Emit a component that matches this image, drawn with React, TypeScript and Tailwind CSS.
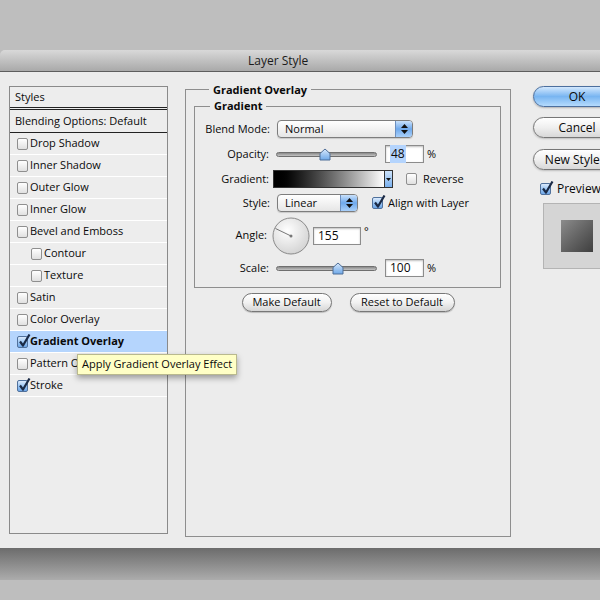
import React from "react";

function Check({ checked = false }: { checked?: boolean }) {
  return (
    <span
      className={
        checked
          ? "relative inline-block h-[12px] w-[11px] shrink-0 rounded-[2px] border border-[#50719c] bg-linear-to-b from-[#dbeafc] via-[#9cc7f4] to-[#6ea6e7]"
          : "relative inline-block h-[12px] w-[11px] shrink-0 rounded-[2px] border border-[#8f8f8f] bg-linear-to-b from-[#ffffff] to-[#e0e0e0]"
      }
    >
      {checked && (
        <svg className="absolute left-[0px] top-[-3px]" width="13" height="14" viewBox="0 0 13 14">
          <path d="M2 7.5 L5 11.5 L11.5 0.5" fill="none" stroke="#1a2a46" strokeWidth="2.2" strokeLinejoin="round" />
        </svg>
      )}
    </span>
  );
}

function StyleRow({
  label,
  checked = false,
  indent = false,
  selected = false,
}: {
  label: string;
  checked?: boolean;
  indent?: boolean;
  selected?: boolean;
}) {
  return (
    <div
      className={
        "flex h-[22px] items-center border-b border-white " +
        (selected ? "bg-[#b5d5fd] font-bold " : "") +
        (indent ? "pl-[21px]" : "pl-[7px]")
      }
    >
      <Check checked={checked} />
      <span className="ml-[2px] whitespace-nowrap">{label}</span>
    </div>
  );
}

function UpDown() {
  return (
    <div className="flex h-full w-[17px] flex-col items-center justify-center gap-[2px] rounded-r-[3px] border-l border-[#6c8fbf] bg-linear-to-b from-[#c9e1fb] via-[#6fa9ec] to-[#a9d0fa]">
      <svg width="7" height="4" viewBox="0 0 7 4"><path d="M3.5 0 L7 4 L0 4 Z" fill="#111" /></svg>
      <svg width="7" height="4" viewBox="0 0 7 4"><path d="M0 0 L7 0 L3.5 4 Z" fill="#111" /></svg>
    </div>
  );
}

function Thumb() {
  return (
    <svg width="12" height="13" viewBox="0 0 12 13">
      <defs>
        <linearGradient id="tg" x1="0" y1="0" x2="0" y2="1">
          <stop offset="0" stopColor="#d8e9fc" />
          <stop offset="1" stopColor="#6ea8e8" />
        </linearGradient>
      </defs>
      <path d="M1 5.5 L6 1 L11 5.5 L11 12 L1 12 Z" fill="url(#tg)" stroke="#4f6f98" strokeWidth="1" />
    </svg>
  );
}

function Track({ thumb }: { thumb: "a" | "b" }) {
  return (
    <div className="relative h-[14px] w-[101px]">
      <div className="absolute left-0 right-0 top-[5px] h-[5px] rounded-full border border-[#6f6f6f] bg-linear-to-b from-[#8a8a8a] to-[#c4c4c4]" />
      <div className={thumb === "a" ? "absolute top-[1px] left-[43px]" : "absolute top-[1px] left-[56px]"}>
        <Thumb />
      </div>
    </div>
  );
}

function Field({ children, className }: { children: React.ReactNode; className: string }) {
  return (
    <div
      className={
        "flex items-center border border-[#8c8c8c] bg-white pl-[4px] text-[12px] shadow-[inset_0_1px_2px_rgba(0,0,0,0.25)] " +
        className
      }
    >
      {children}
    </div>
  );
}

function PillButton({ children, className }: { children: React.ReactNode; className: string }) {
  return (
    <div
      className={
        "flex h-[19px] items-center justify-center rounded-full border border-[#777] bg-linear-to-b from-[#ffffff] via-[#f1f1f1] to-[#d6d6d6] shadow-[0_1px_1px_rgba(0,0,0,0.2)] " +
        className
      }
    >
      {children}
    </div>
  );
}

export default function App() {
  return (
    <div className="relative h-[600px] w-[600px] overflow-hidden bg-[#bebebe] font-['Open_Sans',sans-serif] text-[11px] text-[#0a0a0a]">
      <div className="h-[50px]" />
      <div className="w-[640px] overflow-hidden rounded-tl-[5px]">
        {/* title bar */}
        <div className="flex h-[22px] items-center border-b border-[#5e5e5e] bg-linear-to-b from-[#d9d9d9] to-[#a9a9a9] pl-[248px] text-[12px] text-[#1a1a1a]">
          Layer Style
        </div>
        {/* body */}
        <div className="relative flex h-[476px] items-start bg-[#ececec] pl-[9px] pt-[11px]">
          {/* styles list */}
          <div className="mt-[3px] h-[448px] w-[159px] border border-[#8a8a8a] bg-[#ededed]">
            <div className="flex h-[21px] items-center border-b border-[#222] pl-[5px]">Styles</div>
            <div className="mt-[1px] flex h-[24px] items-center border-y border-[#222] pl-[5px]">
              Blending Options: Default
            </div>
            <StyleRow label="Drop Shadow" />
            <StyleRow label="Inner Shadow" />
            <StyleRow label="Outer Glow" />
            <StyleRow label="Inner Glow" />
            <StyleRow label="Bevel and Emboss" />
            <StyleRow label="Contour" indent />
            <StyleRow label="Texture" indent />
            <StyleRow label="Satin" />
            <StyleRow label="Color Overlay" />
            <StyleRow label="Gradient Overlay" checked selected />
            <StyleRow label="Pattern Overlay" />
            <StyleRow label="Stroke" checked />
          </div>

          {/* middle */}
          <fieldset className="ml-[17px] h-[454px] w-[326px] border border-[#8e8e8e] px-[8px]">
            <legend className="ml-[15px] px-[4px] text-[11px] font-bold leading-[13px]">Gradient Overlay</legend>
            <fieldset className="mt-[3px] h-[189px] w-[307px] border border-[#8e8e8e]">
              <legend className="ml-[15px] px-[4px] text-[11px] font-bold leading-[14px]">Gradient</legend>
              <div className="mt-[7px] flex h-[18px] items-center">
                <div className="w-[75px] text-right">Blend Mode:</div>
                <div className="ml-[7px] flex h-[18px] w-[136px] items-center justify-between rounded-[4px] border border-[#7d7d7d] bg-linear-to-b from-[#ffffff] to-[#e6e6e6] shadow-[0_1px_1px_rgba(0,0,0,0.15)]">
                  <span className="pl-[7px]">Normal</span>
                  <UpDown />
                </div>
              </div>
              <div className="mt-[7px] flex h-[18px] items-center">
                <div className="w-[74px] text-right">Opacity:</div>
                <div className="ml-[7px]">
                  <Track thumb="a" />
                </div>
                <Field className="ml-[8px] h-[18px] w-[39px]">
                  <span className="bg-[#b4d4fd] px-[1px]">48</span>
                </Field>
                <span className="ml-[3px]">%</span>
              </div>
              <div className="mt-[7px] flex h-[18px] items-center">
                <div className="w-[74px] text-right">Gradient:</div>
                <div className="ml-[4px] flex h-[18px] items-stretch border border-[#333]">
                  <div className="w-[110px] bg-linear-to-r from-[#000000] to-[#ffffff]" />
                  <div className="flex w-[8px] items-center justify-center border-l border-[#333] bg-linear-to-b from-[#cfe4fb] to-[#79b0ee]">
                    <svg width="5" height="3" viewBox="0 0 5 3"><path d="M0 0 L5 0 L2.5 3 Z" fill="#111" /></svg>
                  </div>
                </div>
                <div className="ml-[13px] flex items-center">
                  <Check />
                  <span className="ml-[6px]">Reverse</span>
                </div>
              </div>
              <div className="mt-[6px] flex h-[18px] items-center">
                <div className="w-[75px] text-right">Style:</div>
                <div className="ml-[7px] flex h-[18px] w-[81px] items-center justify-between rounded-[4px] border border-[#7d7d7d] bg-linear-to-b from-[#ffffff] to-[#e6e6e6] shadow-[0_1px_1px_rgba(0,0,0,0.15)]">
                  <span className="pl-[7px]">Linear</span>
                  <UpDown />
                </div>
                <div className="ml-[14px] flex items-center">
                  <Check checked />
                  <span className="ml-[5px]">Align with Layer</span>
                </div>
              </div>
              <div className="mt-[5px] flex h-[37px] items-center">
                <div className="w-[72px] text-right">Angle:</div>
                <svg className="ml-[5px]" width="38" height="38" viewBox="0 0 38 38">
                  <defs>
                    <radialGradient id="dial" cx="0.4" cy="0.35" r="0.7">
                      <stop offset="0" stopColor="#ffffff" />
                      <stop offset="1" stopColor="#d2d2d2" />
                    </radialGradient>
                  </defs>
                  <circle cx="19" cy="19" r="18" fill="url(#dial)" stroke="#8a8a8a" strokeWidth="1" />
                  <line x1="19" y1="19" x2="3.5" y2="11.5" stroke="#555" strokeWidth="0.8" />
                  <circle cx="19" cy="19" r="1.5" fill="#777" />
                </svg>
                <Field className="ml-[3px] h-[18px] w-[48px]">155</Field>
                <span className="ml-[3px] -mt-[8px]">°</span>
              </div>
              <div className="mt-[5px] flex h-[18px] items-center">
                <div className="w-[74px] text-right">Scale:</div>
                <div className="ml-[7px]">
                  <Track thumb="b" />
                </div>
                <Field className="ml-[8px] h-[18px] w-[39px]">100</Field>
                <span className="ml-[3px]">%</span>
              </div>
            </fieldset>
            <div className="mt-[5px] flex justify-center gap-[18px]">
              <PillButton className="w-[90px]">Make Default</PillButton>
              <PillButton className="w-[105px]">Reset to Default</PillButton>
            </div>
          </fieldset>

          {/* right column */}
          <div className="ml-[22px] mt-[3px] flex flex-col">
            <div className="flex h-[21px] w-[88px] items-center justify-center rounded-full border border-[#4c6f9e] bg-linear-to-b from-[#d3e8fd] via-[#78b5f1] to-[#b5dbfd] text-[12px] shadow-[0_1px_2px_rgba(0,0,0,0.25)]">
              OK
            </div>
            <div className="mt-[10px] flex h-[21px] w-[88px] items-center justify-center rounded-full border border-[#777] bg-linear-to-b from-[#ffffff] via-[#efefef] to-[#d8d8d8] text-[12px] shadow-[0_1px_2px_rgba(0,0,0,0.2)]">
              Cancel
            </div>
            <div className="mt-[11px] flex h-[21px] w-[88px] items-center justify-center rounded-full border border-[#777] bg-linear-to-b from-[#ffffff] via-[#efefef] to-[#d8d8d8] text-[12px] shadow-[0_1px_2px_rgba(0,0,0,0.2)]">
              New Style...
            </div>
            <div className="ml-[7px] mt-[10px] flex items-center text-[12px]">
              <Check checked />
              <span className="ml-[6px]">Preview</span>
            </div>
            <div className="ml-[10px] mt-[5px] flex h-[66px] w-[67px] items-center justify-center border border-[#b4b4b4] bg-[#d5d5d5]">
              <div className="h-[32px] w-[32px] bg-linear-to-br from-[#8c8c8c] to-[#3f3f3f]" />
            </div>
          </div>

          {/* tooltip */}
          <div className="absolute left-[77px] top-[282px] flex h-[21px] items-center border border-[#b9b98e] bg-[#ffffc6] px-[4px] text-[11px] shadow-[0_3px_6px_rgba(0,0,0,0.35)]">
            Apply Gradient Overlay Effect
          </div>
        </div>
        {/* shadow under window */}
        <div className="h-[32px] bg-linear-to-b from-[#6c6c6c] to-[#acacac]" />
      </div>
    </div>
  );
}
